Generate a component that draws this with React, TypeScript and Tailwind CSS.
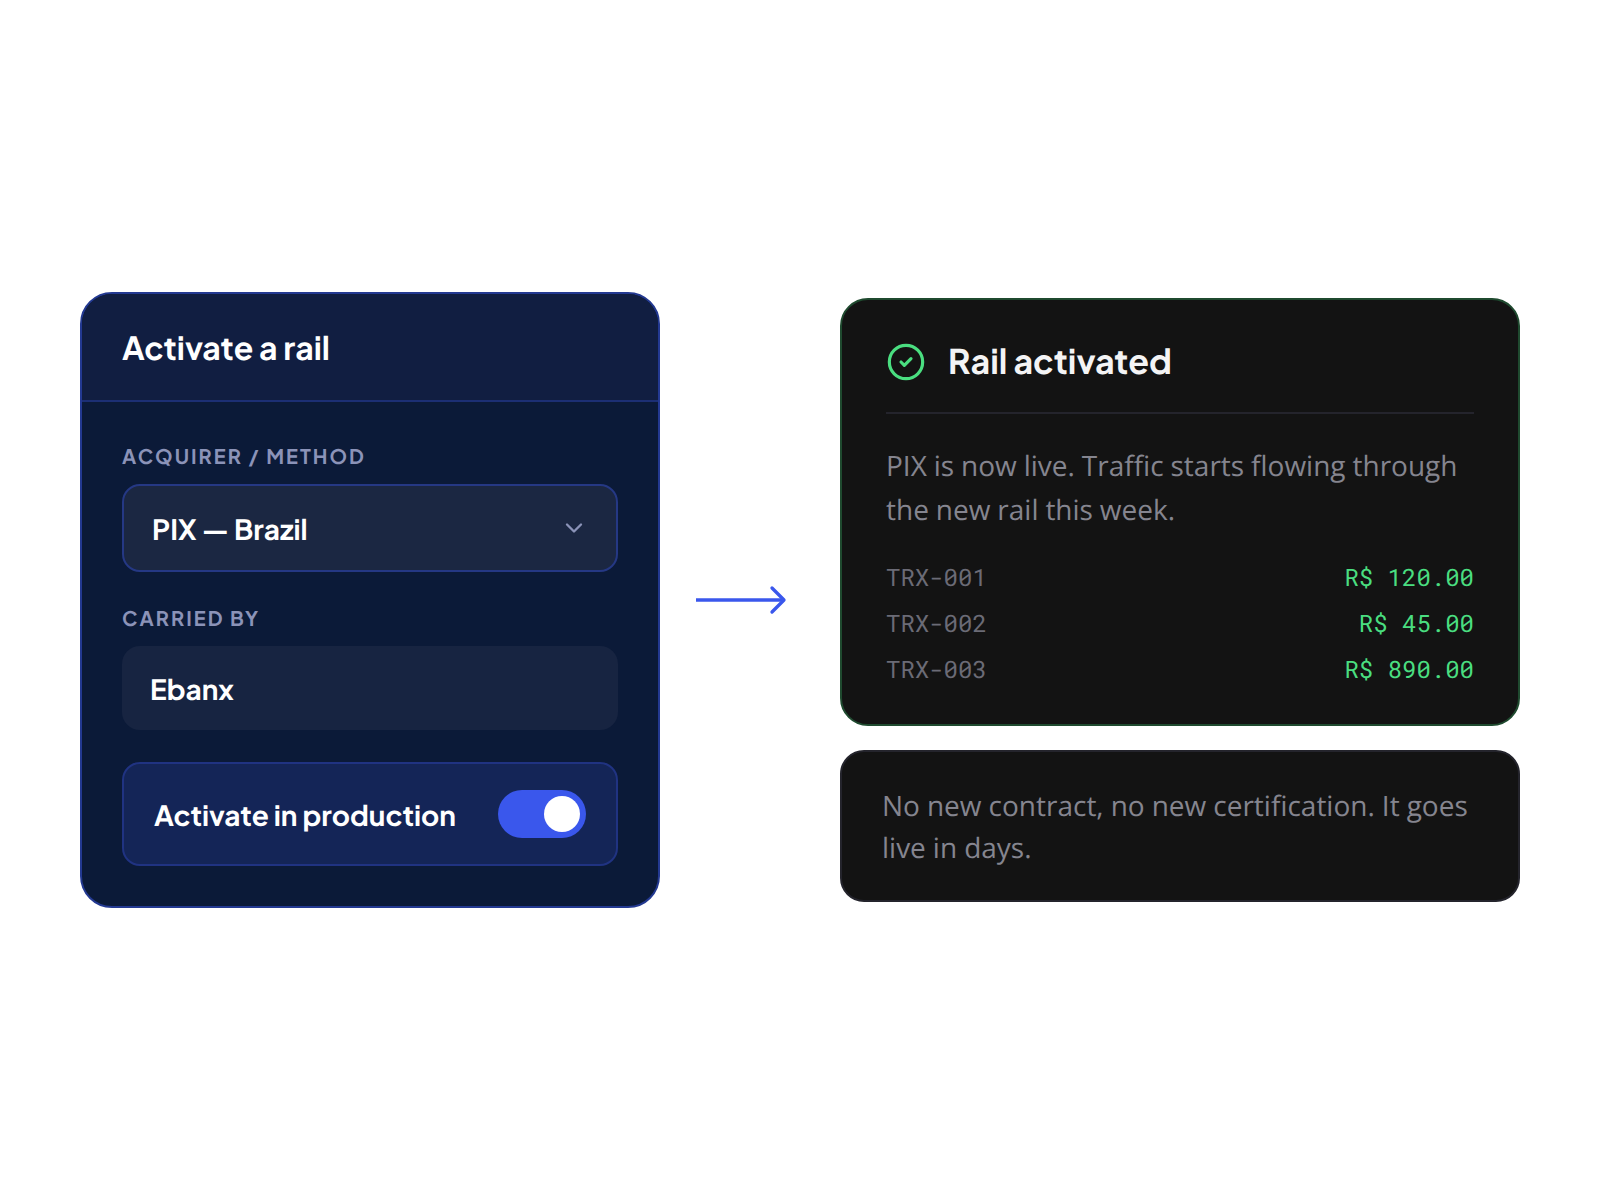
import React from "react";

const transactions = [
  { id: "TRX-001", amount: "R$ 120.00" },
  { id: "TRX-002", amount: "R$ 45.00" },
  { id: "TRX-003", amount: "R$ 890.00" },
];

function Label({ children }: { children: React.ReactNode }) {
  return <div className="mb-3 h-[30px] text-[20px] leading-[29px] font-bold tracking-[2px] text-[#8b93b8]">{children}</div>;
}

export default function App() {
  return (
    <div className="flex min-h-screen items-center bg-white px-20 font-['Plus_Jakarta_Sans','Inter',sans-serif] text-white antialiased [text-rendering:geometricPrecision]">
      <section className="w-[580px] overflow-hidden rounded-[32px] border-2 border-[#233991] bg-[#0b1a38]">
        <header className="flex h-[108px] items-center border-b-2 border-[#1c2f74] bg-[#111e41] px-10">
          <h2 className="pt-0.5 text-[32px] font-bold">Activate a rail</h2>
        </header>
        <div className="flex flex-col gap-8 p-10">
          <div>
            <Label>ACQUIRER / METHOD</Label>
            <div className="flex h-[88px] items-center justify-between rounded-[18px] border-2 border-[#253884] bg-[#1b2742] px-7">
              <span className="pt-1 text-[28px] font-bold">PIX — Brazil</span>
              <svg className="h-7 w-7 text-[#8b93b8]" viewBox="0 0 24 24" fill="none" stroke="currentColor" strokeWidth="2" strokeLinecap="round" strokeLinejoin="round">
                <path d="m6 9 6 6 6-6" />
              </svg>
            </div>
          </div>
          <div>
            <Label>CARRIED BY</Label>
            <div className="flex h-[84px] items-center rounded-[18px] bg-[#172441] px-7">
              <span className="pt-1 text-[28px] font-bold">Ebanx</span>
            </div>
          </div>
          <div className="flex h-[104px] items-center justify-between rounded-[18px] border-2 border-[#203382] bg-[#142557] px-[30px]">
            <span className="pt-1 text-[28px] font-bold">Activate in production</span>
            <div className="flex h-12 w-[88px] items-center justify-end rounded-full bg-[#3a57ec] px-1.5">
              <div className="h-9 w-9 rounded-full bg-white" />
            </div>
          </div>
        </div>
      </section>

      <div className="flex w-[180px] pl-9">
        <svg className="h-9 w-[92px]" viewBox="0 0 92 36" fill="none" stroke="#3a57ec" strokeWidth="3.3">
          <path d="M0 18H88" />
          <path d="M76 6L88 18L76 30" strokeLinecap="round" strokeLinejoin="round" />
        </svg>
      </div>

      <div className="flex w-[680px] flex-col gap-6">
        <section className="h-[428px] rounded-[28px] border-2 border-[#1f4a2f] bg-[#131313] px-11 pt-10">
          <header className="flex h-[74px] items-start gap-[22px] border-b-2 border-[#24242c]">
            <svg className="mt-0.5 h-10 w-10 text-[#4ade80]" viewBox="0 0 24 24" fill="none" stroke="currentColor" strokeWidth="1.9" strokeLinecap="round" strokeLinejoin="round">
              <circle cx="12" cy="12" r="10" />
              <path d="m9 12 2 2 4-4" />
            </svg>
            <h2 className="text-[34px] leading-[41px] font-bold text-[#f4f4f5]">Rail activated</h2>
          </header>
          <p className="mt-[30px] font-['Open_Sans',sans-serif] text-[28px] leading-[44px] [word-spacing:-0.35px] text-[#85858f]">
            PIX is now live. Traffic starts flowing through the new rail this week.
          </p>
          <ul className="mt-[29px] flex flex-col gap-3.5 font-['Roboto_Mono',monospace] text-[24px] leading-8">
            {transactions.map((t) => (
              <li key={t.id} className="flex justify-between">
                <span className="text-[#6b6b76]">{t.id}</span>
                <span className="text-[#4ade80]">{t.amount}</span>
              </li>
            ))}
          </ul>
        </section>
        <section className="rounded-[24px] border-2 border-[#24242c] bg-[#131313] px-10 pt-[33px] pb-[31px]">
          <p className="font-['Open_Sans',sans-serif] text-[28px] leading-[42px] [word-spacing:-0.25px] text-[#85858f]">
            No new contract, no new certification. It goes live in days.
          </p>
        </section>
      </div>
    </div>
  );
}
